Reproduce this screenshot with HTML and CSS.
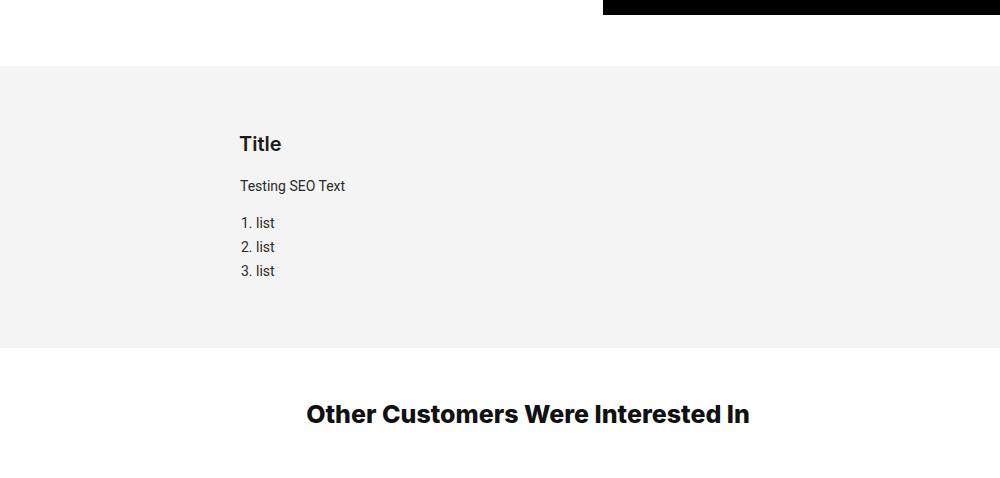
FILE: index.html
```html
<!DOCTYPE html>
<html>
<head>
<meta charset="utf-8">
<link rel="stylesheet" href="styles.css">
</head>
<body>
<header class="topbar">
  <div class="topbar-black"></div>
</header>
<section class="seo">
  <div class="seo-inner">
    <h2 class="seo-title">Title</h2>
    <p class="seo-text">Testing SEO Text</p>
    <ol class="seo-list">
      <li>list</li>
      <li>list</li>
      <li>list</li>
    </ol>
  </div>
</section>
<section class="related">
  <h2 class="related-title">Other Customers Were Interested In</h2>
</section>
</body>
</html>
```

FILE: styles.css
```css
html, body {
  margin: 0;
  padding: 0;
  background: #ffffff;
  font-family: Inter, "Liberation Sans", sans-serif;
  color: #1a1a1a;
}

.topbar {
  height: 66px;
  display: flex;
  justify-content: flex-end;
  align-items: flex-start;
}

.topbar-black {
  width: 397px;
  height: 15px;
  background: #000000;
}

.seo {
  background: #f4f4f4;
  height: 282px;
  box-sizing: border-box;
  padding-top: 64px;
}

.seo-inner {
  padding-left: 240px;
}

.seo-title {
  margin: 0 0 0 -1px;
  font-size: 20px;
  line-height: 28px;
  font-weight: 600;
  color: #1a1a1a;
}

.seo-text {
  margin: 18px 0 0;
  font-family: Roboto, "Liberation Sans", sans-serif;
  font-size: 14px;
  line-height: 20px;
  color: #2a2a2a;
}

.seo-list {
  margin: 15px 0 0;
  padding-left: 16px;
  font-family: Roboto, "Liberation Sans", sans-serif;
  font-size: 14px;
  line-height: 24px;
  color: #2a2a2a;
}

.related {
  padding-top: 50px;
  display: flex;
  justify-content: center;
}

.related-title {
  margin: 0 0 0 56px;
  font-size: 25px;
  line-height: 32px;
  font-weight: 800;
  color: #111111;
}
```
